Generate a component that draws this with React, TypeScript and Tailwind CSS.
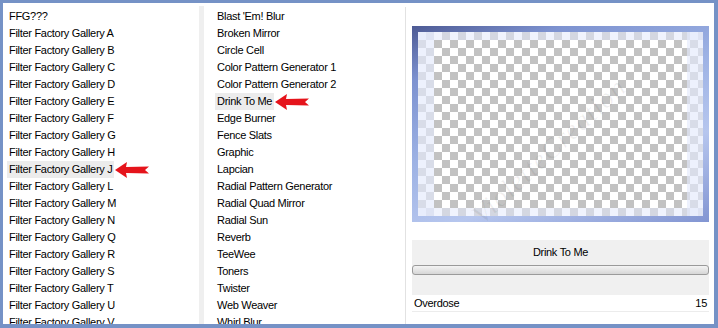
import React from 'react';

const leftItems = [
  'FFG???',
  'Filter Factory Gallery A',
  'Filter Factory Gallery B',
  'Filter Factory Gallery C',
  'Filter Factory Gallery D',
  'Filter Factory Gallery E',
  'Filter Factory Gallery F',
  'Filter Factory Gallery G',
  'Filter Factory Gallery H',
  'Filter Factory Gallery J',
  'Filter Factory Gallery L',
  'Filter Factory Gallery M',
  'Filter Factory Gallery N',
  'Filter Factory Gallery Q',
  'Filter Factory Gallery R',
  'Filter Factory Gallery S',
  'Filter Factory Gallery T',
  'Filter Factory Gallery U',
  'Filter Factory Gallery V',
];

const rightItems = [
  "Blast 'Em! Blur",
  'Broken Mirror',
  'Circle Cell',
  'Color Pattern Generator 1',
  'Color Pattern Generator 2',
  'Drink To Me',
  'Edge Burner',
  'Fence Slats',
  'Graphic',
  'Lapcian',
  'Radial Pattern Generator',
  'Radial Quad Mirror',
  'Radial Sun',
  'Reverb',
  'TeeWee',
  'Toners',
  'Twister',
  'Web Weaver',
  'Whirl Blur',
];

// red pointer arrow, tip on the left
function Arrow() {
  return (
    <svg width="34" height="16" viewBox="0 0 34 16" className="ml-[1px] shrink-0">
      <polygon
        points="0,8 12,0 11,5 34,4.5 30,8 34,11.5 11,11 12,16"
        fill="#e5141b"
      />
    </svg>
  );
}

function FilterList({ items, selected, padLeft }: { items: string[]; selected: string; padLeft: string }) {
  return (
    <div className={`flex flex-col pt-[5px] ${padLeft}`}>
      {items.map((item) => (
        <div key={item} className="flex h-[17px] items-center whitespace-nowrap">
          <span
            className={`h-[17px] px-[2px] leading-[17px] ${item === selected ? 'bg-[#ececec]' : ''}`}
          >
            {item}
          </span>
          {item === selected && <Arrow />}
        </div>
      ))}
    </div>
  );
}

export default function App() {
  return (
    <div
      className="h-[328px] w-[718px] overflow-hidden bg-[#7592c6] pb-[4px] pl-[3px] pr-[4px] pt-[3px] text-[11px] tracking-[-0.3px] text-black"
      style={{ fontFamily: '"Liberation Sans", Arial, sans-serif' }}
    >
      <div className="flex h-full overflow-hidden bg-white">
        {/* Category list */}
        <div className="w-[196px] shrink-0 overflow-hidden">
          <FilterList items={leftItems} selected="Filter Factory Gallery J" padLeft="pl-[4px]" />
        </div>
        <div className="mt-[3px] w-[5px] shrink-0 bg-[#efefef]" />

        {/* Filter list */}
        <div className="w-[201px] shrink-0 overflow-hidden">
          <FilterList items={rightItems} selected="Drink To Me" padLeft="pl-[11px]" />
        </div>
        <div className="mt-[4px] w-px shrink-0 bg-[#e2e2e2]" />

        {/* Preview + controls */}
        <div className="relative flex flex-1 flex-col pl-[6px] pr-[5px] pt-[23px]">
          <div className="h-[196px] bg-[linear-gradient(160deg,#4d5a94_0%,#7d92d0_18%,#9db2e4_45%,#b6c6ee_70%,#8295d2_100%)] p-[6px]">
            <div className="h-full w-full bg-[conic-gradient(#c2c2c2_25%,#ffffff_0_50%,#c2c2c2_0_75%,#ffffff_0)] bg-[length:16px_16px] shadow-[inset_16px_0_0_rgba(228,234,252,0.65),inset_-16px_0_0_rgba(228,234,252,0.65),inset_0_8px_0_rgba(228,234,252,0.55),inset_0_-8px_0_rgba(228,234,252,0.55)]" />
          </div>

          <div className="mt-[18px] flex h-[55px] flex-col bg-[#f0f0f0]">
            <div className="pt-[5px] text-center leading-[14px]">Drink To Me</div>
            <div className="mt-[6px] h-[10px] rounded-[3px] border border-[#9a9a9a] bg-[linear-gradient(#f4f4f4,#d6d6d6)]" />
          </div>
          <div className="flex h-[17px] items-center justify-between border-b border-[#ececec] px-[2px]">
            <span>Overdose</span>
            <span>15</span>
          </div>

          {/* watermark */}
          <div
            className="pointer-events-none absolute left-[70px] top-[195px] origin-left -rotate-[43deg] whitespace-nowrap text-[28px] italic tracking-[1px] text-black/[0.06]"
            style={{ fontFamily: '"Liberation Serif", serif' }}
          >
            VioletteCreation
          </div>
        </div>
      </div>
    </div>
  );
}
